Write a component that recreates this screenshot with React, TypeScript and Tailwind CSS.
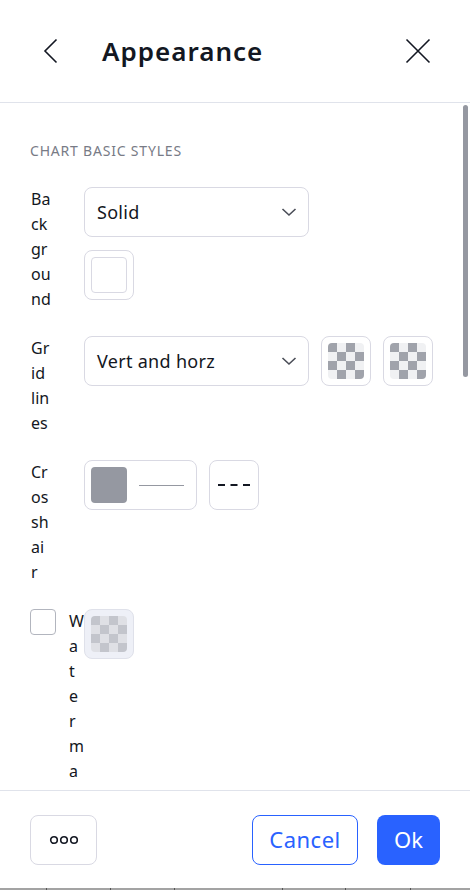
import React from "react";

const ink = "text-[#131722]";

function Checker({ dark, light }: { dark: string; light: string }) {
  const cells = Array.from({ length: 16 }, (_, i) => {
    const r = Math.floor(i / 4);
    const c = i % 4;
    return (r + c) % 2 === 0;
  });
  return (
    <div className="grid grid-cols-4 w-[36px] h-[36px] rounded-[4px] overflow-hidden">
      {cells.map((isDark, i) => (
        <div key={i} style={{ background: isDark ? dark : light }} />
      ))}
    </div>
  );
}

function Swatch({ children, disabled }: { children: React.ReactNode; disabled?: boolean }) {
  return (
    <div
      className={`relative z-10 w-[50px] h-[50px] shrink-0 rounded-[8px] border flex items-center justify-center ${
        disabled ? "bg-[#eef0f7] border-[#dfe1ea]" : "bg-white border-[#d9d9e3]"
      }`}
    >
      {children}
    </div>
  );
}

function Select({ value }: { value: string }) {
  return (
    <div className="w-[225px] h-[50px] shrink-0 rounded-[8px] border border-[#d9d9e3] flex items-center justify-between pl-[12px] pr-[11px]">
      <span className={`text-[18px] tracking-[0.3px] ${ink}`}>{value}</span>
      <svg width="16" height="10" viewBox="0 0 16 10" fill="none">
        <path d="M1.5 2l6.5 6 6.5-6" stroke="#4a4d57" strokeWidth="1.6" />
      </svg>
    </div>
  );
}

function Label({ lines }: { lines: string[] }) {
  return (
    <div className={`w-[54px] shrink-0 pl-[1px] text-[16px] leading-[25px] ${ink}`}>
      {lines.map((l, i) => (
        <div key={i}>{l}</div>
      ))}
    </div>
  );
}

export default function App() {
  return (
    <div
      className="w-[470px] h-[890px] bg-white flex flex-col overflow-hidden"
      style={{ fontFamily: '"Noto Sans", sans-serif' }}
    >
      {/* Header */}
      <div className="h-[103px] shrink-0 border-b border-[#e0e3eb] flex items-center pl-[43px] pr-[39px]">
        <svg width="15" height="26" viewBox="0 0 15 26" fill="none" className="shrink-0">
          <path d="M13.5 1.5L2 13l11.5 11.5" stroke="#131722" strokeWidth="1.6" />
        </svg>
        <h1 className={`ml-[44px] text-[26px] font-semibold tracking-[1px] ${ink}`}>Appearance</h1>
        <svg width="26" height="26" viewBox="0 0 26 26" fill="none" className="ml-auto shrink-0">
          <path d="M1.5 1.5l23 23M24.5 1.5l-23 23" stroke="#131722" strokeWidth="1.6" />
        </svg>
      </div>

      {/* Body */}
      <div className="relative flex-1 overflow-hidden">
        <div className="pt-[38px] pl-[30px]">
          <div className="text-[14px] leading-[20px] text-[#787b86] uppercase tracking-[0.8px]">Chart basic styles</div>

          <div className="mt-[26px] flex flex-col gap-[24px]">
            {/* Background */}
            <div className="flex">
              <Label lines={["Ba", "ck", "gr", "ou", "nd"]} />
              <div className="flex flex-col gap-[13px]">
                <Select value="Solid" />
                <Swatch>
                  <div className="w-[36px] h-[36px] rounded-[4px] border border-[#d9d9e3] bg-white" />
                </Swatch>
              </div>
            </div>

            {/* Grid lines */}
            <div className="flex">
              <Label lines={["Gr", "id", "lin", "es"]} />
              <div className="flex gap-[12px]">
                <Select value="Vert and horz" />
                <Swatch>
                  <Checker dark="#a0a3ab" light="#f0f1f3" />
                </Swatch>
                <Swatch>
                  <Checker dark="#a0a3ab" light="#f0f1f3" />
                </Swatch>
              </div>
            </div>

            {/* Crosshair */}
            <div className="flex">
              <Label lines={["Cr", "os", "sh", "ai", "r"]} />
              <div className="flex gap-[12px]">
                <div className="w-[113px] h-[50px] rounded-[8px] border border-[#d9d9e3] flex items-center pl-[6px]">
                  <div className="w-[36px] h-[36px] rounded-[4px] bg-[#9598a1]" />
                  <div className="ml-[12px] w-[45px] h-px bg-[#9598a1]" />
                </div>
                <div className="w-[50px] h-[50px] rounded-[8px] border border-[#d9d9e3] flex items-center justify-center">
                  <svg width="34" height="4" viewBox="0 0 34 4">
                    <path d="M1 2h32" stroke="#131722" strokeWidth="1.8" strokeDasharray="7 5.5" />
                  </svg>
                </div>
              </div>
            </div>

            {/* Watermark */}
            <div className="flex">
              <div className="w-[54px] shrink-0 flex">
                <div className="w-[26px] h-[26px] shrink-0 rounded-[4px] border border-[#b2b5be] bg-white" />
                <div className={`ml-[13px] w-[10px] text-[16px] leading-[25px] ${ink}`}>
                  {["W", "a", "t", "e", "r", "m", "a", "r", "k"].map((c, i) => (
                    <div key={i}>{c}</div>
                  ))}
                </div>
              </div>
              <Swatch disabled>
                <Checker dark="#c3c5cc" light="#dfe0e5" />
              </Swatch>
            </div>
          </div>
        </div>

        {/* scrollbar thumb */}
        <div className="absolute right-[2px] top-[2px] w-[5px] h-[272px] rounded-full bg-[#9598a1]" />
      </div>

      {/* Footer */}
      <div className="h-[98px] shrink-0 border-t border-[#e0e3eb] flex items-center px-[30px]">
        <button className="w-[67px] h-[50px] rounded-[8px] border border-[#d9d9e3] flex items-center justify-center">
          <svg width="30" height="10" viewBox="0 0 30 10" fill="none">
            <circle cx="5" cy="5" r="3.3" stroke="#131722" strokeWidth="1.6" />
            <circle cx="15" cy="5" r="3.3" stroke="#131722" strokeWidth="1.6" />
            <circle cx="25" cy="5" r="3.3" stroke="#131722" strokeWidth="1.6" />
          </svg>
        </button>
        <button className="ml-auto w-[106px] h-[50px] rounded-[8px] border border-[#2962ff] text-[#2962ff] text-[22px] tracking-[0.5px]">
          Cancel
        </button>
        <button className="ml-[19px] w-[63px] h-[50px] rounded-[8px] bg-[#2962ff] text-white text-[22px]">
          Ok
        </button>
      </div>

      {/* strip below the dialog */}
      <svg width="470" height="2" className="shrink-0 block">
        <rect width="470" height="2" fill="#a3a3a3" />
        {[46, 110, 174, 282, 345, 410].map((x) => (
          <rect key={x} x={x} width="1" height="2" fill="#555" />
        ))}
      </svg>
    </div>
  );
}
